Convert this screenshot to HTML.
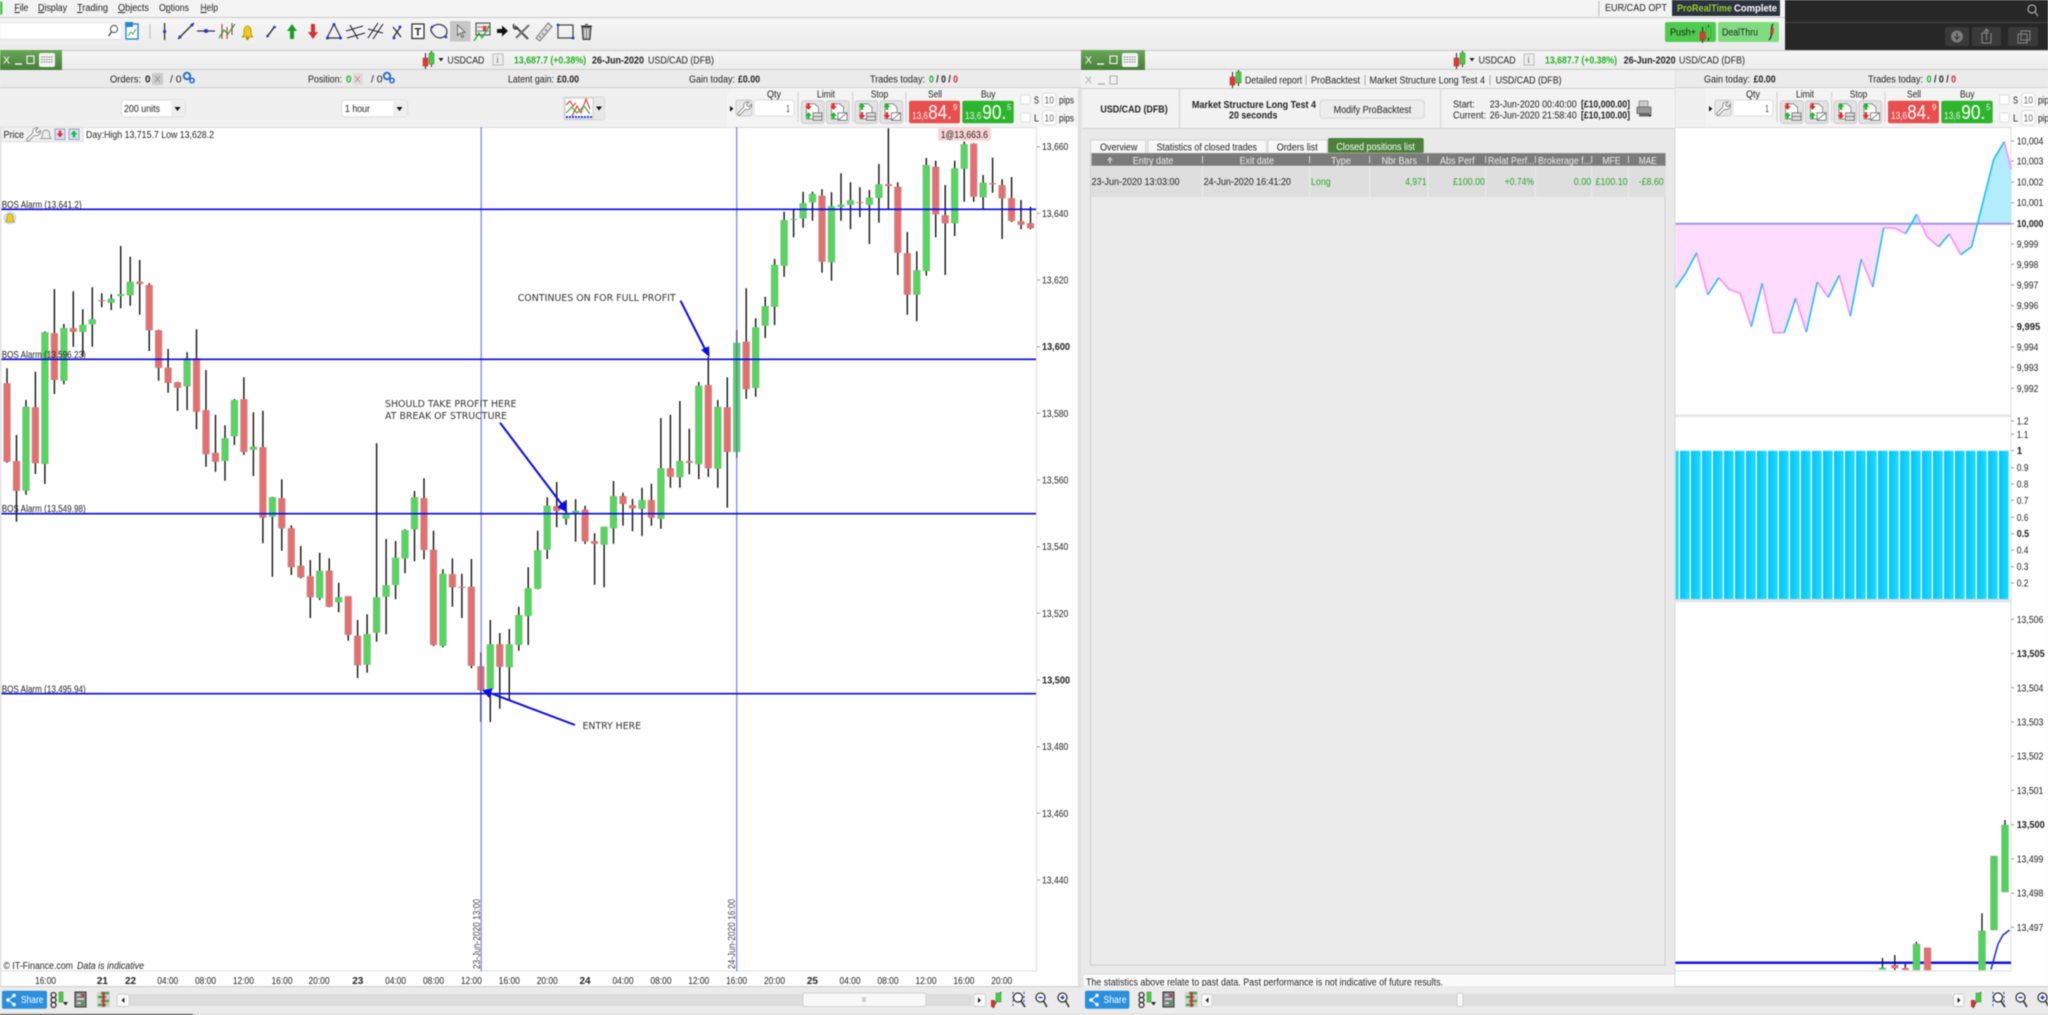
<!DOCTYPE html>
<html><head><meta charset="utf-8"><title>ProRealTime</title>
<style>
html,body{margin:0;padding:0;background:#ececec;width:2048px;height:1015px;overflow:hidden}
svg{display:block;filter:blur(.4px)}
text{font-family:"Liberation Sans",sans-serif;font-size:10px;fill:#222}
.b{font-weight:bold}
.g{fill:#2aa52a}.bg{font-weight:bold;fill:#22b022}
.r{fill:#d22}
.w{fill:#fff}
.gy{fill:#666}
.an{font-family:"DejaVu Sans","Liberation Sans",sans-serif;fill:#333}
.h{fill:#eee}
</style></head><body>
<svg xmlns="http://www.w3.org/2000/svg" width="2048" height="1015" viewBox="0 0 2048 1015">
<defs>
<linearGradient id="tb" x1="0" y1="0" x2="0" y2="1"><stop offset="0" stop-color="#f6f6f6"/><stop offset="1" stop-color="#ebebeb"/></linearGradient>
<linearGradient id="gb" x1="0" y1="0" x2="0" y2="1"><stop offset="0" stop-color="#6aa85a"/><stop offset="1" stop-color="#467f38"/></linearGradient>
<linearGradient id="cy" x1="0" y1="0" x2="1" y2="0"><stop offset="0" stop-color="#08c2f8"/><stop offset="1" stop-color="#1cdcff"/></linearGradient>
<pattern id="bars" patternUnits="userSpaceOnUse" x="1680" y="450" width="11" height="150"><rect x="0" y="0.7" width="9.7" height="148.3" fill="url(#cy)"/></pattern>
<g id="ci"><path d="M3.5 0V16M9.5-2V14" stroke="#222" stroke-width="1"/><rect x="1" y="5" width="5" height="8" fill="#e33" stroke="#933" stroke-width=".5"/><rect x="7" y="0" width="5" height="11" fill="#4c4" stroke="#383" stroke-width=".5"/></g>
<g id="gear"><circle cx="0" cy="0" r="3.2" fill="none" stroke="#2a6fd0" stroke-width="2"/><circle cx="5" cy="4.5" r="2.2" fill="none" stroke="#2a6fd0" stroke-width="1.6"/></g>
<path id="wr" d="M2 14.5L1 13 7.5 6.500C6.500 3.500 9 .5 12.500 1.500L10 4 10.800 5.800 12.800 6.200 14.800 3.800C15.500 7.500 12 10 9 8.800L3 14.800Z" fill="#fff" stroke="#777" stroke-width=".8"/>
<g id="dn"><path d="M-1.2-3.4h2.4v3h2.2l-3.4 3.8-3.4-3.8h2.2z" fill="#e22"/></g>
<g id="up"><path d="M-1.2 3.4h2.4v-3h2.2l-3.4-3.8-3.4 3.8h2.2z" fill="#1b2"/></g>
<g id="ob"><rect width="22.6" height="22.6" rx="2.5" fill="#e3e3e3" stroke="#c9c9c9"/><path d="M5 3h8l4 3.5V18H5z" fill="#fff" stroke="#777" stroke-width=".8"/></g>
<g id="tbl"><rect x="11.5" y="12" width="9" height="7.5" fill="#ddd" stroke="#666" stroke-width=".8"/><path d="M11.5 15.7h9" stroke="#666" stroke-width=".8"/></g>
<g id="sl"><rect x="11.5" y="12" width="9" height="7.5" fill="#fff" stroke="#666" stroke-width=".8"/><path d="M11.5 19.5l9-7.5" stroke="#666" stroke-width=".8"/></g>
<g id="orderpanel">
<path d="M727 127 Q727 122 727 96 Q727 90 733 88 H1078 V127Z" fill="#f4f4f4"/>
<path d="M730 106l3.4 2.8-3.4 2.8z" fill="#111"/>
<rect x="736" y="100" width="16" height="16" rx="2" fill="#e6e6e6" stroke="#ccc"/><use href="#wr" x="736.500" y="100.500"/>
<rect x="754" y="100" width="40" height="16" rx="2.5" fill="#fff" stroke="#ddd"/>
<text x="767" y="97.5" textLength="14" lengthAdjust="spacingAndGlyphs">Qty</text>
<text x="786.5" y="112" textLength="3" lengthAdjust="spacingAndGlyphs">1</text>
<path d="M798 92V122M852.7 92V122M906 92V122" stroke="#ccc"/>
<text x="817" y="97.5" textLength="18" lengthAdjust="spacingAndGlyphs">Limit</text>
<text x="870.7" y="97.5" textLength="17.5" lengthAdjust="spacingAndGlyphs">Stop</text>
<use href="#ob" x="801.5" y="100.8"/><use href="#tbl" x="801.5" y="100.8"/><use href="#dn" x="808.5" y="106.5"/><use href="#up" x="808.5" y="115.5"/>
<use href="#ob" x="826.5" y="100.8"/><use href="#sl" x="826.5" y="100.8"/><use href="#dn" x="833.5" y="106.5"/><use href="#up" x="833.5" y="115.5"/>
<use href="#ob" x="855" y="100.8"/><use href="#tbl" x="855" y="100.8"/><use href="#up" x="862" y="106.5"/><use href="#dn" x="862" y="115.5"/>
<use href="#ob" x="880" y="100.8"/><use href="#sl" x="880" y="100.8"/><use href="#up" x="887" y="106.5"/><use href="#dn" x="887" y="115.5"/>
<text x="928" y="97.5" textLength="14" lengthAdjust="spacingAndGlyphs">Sell</text>
<text x="981" y="97.5" textLength="14.5" lengthAdjust="spacingAndGlyphs">Buy</text>
<rect x="909" y="100.7" width="51" height="22.6" rx="2" fill="#e8504f"/>
<rect x="962.3" y="100.7" width="51.4" height="22.6" rx="2" fill="#2db52d"/>
<text x="912" y="119" class="h" textLength="16" lengthAdjust="spacingAndGlyphs">13,6</text>
<text x="928.3" y="119" class="w" style="font-size:20px" textLength="23.5" lengthAdjust="spacingAndGlyphs">84.</text>
<text x="953" y="110" class="h" style="font-size:8px">9</text>
<text x="965" y="119" class="h" textLength="16.5" lengthAdjust="spacingAndGlyphs">13,6</text>
<text x="982.3" y="119" class="w" style="font-size:20px" textLength="24" lengthAdjust="spacingAndGlyphs">90.</text>
<text x="1007" y="110" class="h" style="font-size:8px">5</text>
<rect x="1020.7" y="95" width="9.3" height="9.3" rx="1" fill="#fff" stroke="#ddd"/>
<text x="1034" y="103.5" textLength="5" lengthAdjust="spacingAndGlyphs">S</text>
<rect x="1042.7" y="93" width="13.3" height="13.7" rx="3" fill="#fff" stroke="#ddd"/>
<text x="1044.5" y="103.5" class="gy" textLength="9.5" lengthAdjust="spacingAndGlyphs">10</text>
<text x="1059" y="103.5" textLength="15" lengthAdjust="spacingAndGlyphs">pips</text>
<rect x="1020.7" y="113" width="9.3" height="9.3" rx="1" fill="#fff" stroke="#ddd"/>
<text x="1034" y="121.5" textLength="5" lengthAdjust="spacingAndGlyphs">L</text>
<rect x="1042.7" y="110.5" width="13.3" height="14.5" rx="3" fill="#fff" stroke="#ddd"/>
<text x="1044.5" y="121.5" class="gy" textLength="9.5" lengthAdjust="spacingAndGlyphs">10</text>
<text x="1059" y="121.5" textLength="15" lengthAdjust="spacingAndGlyphs">pips</text>
</g>
</defs>

<rect width="2048" height="1015" fill="#ececec"/>
<!-- menu -->
<rect width="2048" height="17" fill="#f3f3f3"/><path d="M0 17.5H2048" stroke="#c9c9c9"/>
<rect x="-3" y="2" width="5" height="12" fill="#4c4" stroke="#383" stroke-width=".5"/>
<text x="14.4" y="11" textLength="14" lengthAdjust="spacingAndGlyphs"><tspan text-decoration="underline">F</tspan>ile</text>
<text x="38" y="11" textLength="29" lengthAdjust="spacingAndGlyphs"><tspan text-decoration="underline">D</tspan>isplay</text>
<text x="77" y="11" textLength="31" lengthAdjust="spacingAndGlyphs"><tspan text-decoration="underline">T</tspan>rading</text>
<text x="118" y="11" textLength="31" lengthAdjust="spacingAndGlyphs"><tspan text-decoration="underline">O</tspan>bjects</text>
<text x="159" y="11" textLength="30" lengthAdjust="spacingAndGlyphs">O<tspan text-decoration="underline">p</tspan>tions</text>
<text x="200.5" y="11" textLength="17.5" lengthAdjust="spacingAndGlyphs"><tspan text-decoration="underline">H</tspan>elp</text>
<path d="M1599 1V16" stroke="#bbb"/>
<text x="1605" y="11" textLength="62" lengthAdjust="spacingAndGlyphs">EUR/CAD OPT</text>
<rect x="1672" y="0" width="108" height="16" fill="#2c3340"/>
<text x="1677" y="11.5" class="b" style="fill:#9c3" textLength="55" lengthAdjust="spacingAndGlyphs">ProRealTime</text>
<text x="1734" y="11.5" class="b w" textLength="43" lengthAdjust="spacingAndGlyphs">Complete</text>
<!-- toolbar -->
<rect y="18" width="2048" height="32" fill="url(#tb)"/><path d="M0 50.5H2048" stroke="#c6c6c6"/>
<rect x="-4" y="22.7" width="126" height="16.5" rx="3" fill="#fff" stroke="#e2e2e2"/>
<circle cx="114" cy="29" r="3.6" fill="none" stroke="#444"/><path d="M111.5 32l-3 4" stroke="#444" stroke-width="1.3"/>
<g id="tools">
<rect x="126" y="24" width="12" height="15" fill="#fff" stroke="#2a86c8" stroke-width="1.4"/><path d="M128 36l3-4 2 2 3-5" stroke="#3a4" fill="none"/><rect x="125" y="22" width="8" height="5" fill="#2a86c8"/>
<path d="M150 24V39" stroke="#bbb"/>
<path d="M164.6 23V40" stroke="#333" stroke-width="1.3"/><circle cx="164.6" cy="31.5" r="1.6" fill="#23c"/>
<path d="M178 39L194 23" stroke="#333" stroke-width="1.3"/><circle cx="180" cy="37" r="1.5" fill="#23c"/><circle cx="192" cy="25" r="1.5" fill="#23c"/>
<path d="M197 31H215" stroke="#333" stroke-width="1.3"/><circle cx="206" cy="31" r="2" fill="#23c"/>
<path d="M219 38L224 30 228 34 235 24" stroke="#2a2" fill="none" stroke-width="1.2"/><path d="M222 24v15M227 27v12M232 23v12" stroke="#a33" stroke-width="1"/>
<path d="M242 37c2-1 2-4 2-7a3.5 4 0 0 1 7 0c0 3 0 6 2 7z" fill="#f2c818" stroke="#a80" stroke-width=".7"/><circle cx="247.5" cy="38.5" r="1.5" fill="#a80"/>
<path d="M267 37L275 26" stroke="#222" stroke-width="1.4"/><circle cx="267.5" cy="36" r="1.3" fill="#23c"/><circle cx="274.5" cy="27" r="1.3" fill="#23c"/>
<path d="M292 24l5 7h-3v8h-4v-8h-3z" fill="#1a9d2a"/>
<path d="M313 39l5-7h-3v-8h-4v8h-3z" fill="#d93030"/>
<path d="M334 24L327 38H341Z" fill="none" stroke="#334" stroke-width="1.2"/><circle cx="334" cy="24.5" r="1.5" fill="#23c"/><circle cx="327.5" cy="38" r="1.5" fill="#23c"/><circle cx="340.5" cy="38" r="1.5" fill="#23c"/>
<path d="M346 31L363 26M347 38L365 33M350 25L358 39" stroke="#223" stroke-width="1.1"/>
<path d="M368 38L378 23M373 39L383 24M368 29L383 33" stroke="#223" stroke-width="1.1"/>
<path d="M393 38L401 26M393 27L401 37" stroke="#223" stroke-width="1.2"/><circle cx="400" cy="27" r="1.4" fill="#23c"/><circle cx="394" cy="38" r="1.4" fill="#23c"/>
<rect x="412" y="24" width="12" height="14.5" fill="#fff" stroke="#333" stroke-width="1.3"/><text x="414.5" y="35.5" class="b" style="font-size:11px">T</text>
<path d="M432 27C438 22 447 25 447 32C447 38 437 40 434 35C431 32 430 29 432 27Z" fill="none" stroke="#334" stroke-width="1.2"/><circle cx="432" cy="27" r="1.3" fill="#23c"/><circle cx="446" cy="37" r="1.3" fill="#23c"/>
<rect x="450" y="21" width="20.5" height="20.5" fill="#c6c6c6"/><path d="M457.5 25v10.5l2.6-2.4 2 4.3 1.6-.8-2-4.2h3.4z" fill="#e6e6e6" stroke="#555" stroke-width=".8"/>
<rect x="476" y="23" width="14" height="12" fill="#e9e9e9" stroke="#444"/><path d="M477 27h12M477 31h12" stroke="#888"/><path d="M474 41L479 33 482 38 490 25" fill="none" stroke="#2a2" stroke-width="1.2"/><rect x="483" y="26" width="3" height="5" fill="#d33"/>
<path d="M497 29h5v-3.5l6 5.500-6 5.500V33h-5z" fill="#111"/>
<path d="M515 26L528 39" stroke="#555" stroke-width="2.200"/><path d="M529 25L516 38" stroke="#777" stroke-width="2.200"/><path d="M514 24a3.500 3.500 0 0 0 1 5l3-1" stroke="#222" stroke-width="1.300" fill="none"/>
<path d="M536 38L548 23l4 3.5L540 41z" fill="#ddd" stroke="#777"/><path d="M539 36l2 2M542 33l2 2M545 29l2 2" stroke="#777"/>
<rect x="558" y="25" width="15" height="13" fill="none" stroke="#444" stroke-width="1.2"/><circle cx="558" cy="25" r="1.4" fill="#23c"/><circle cx="573" cy="38" r="1.4" fill="#23c"/>
<path d="M582 27h9l-1 12.5h-7zM581 26h11M585 24.5h3" fill="#999" stroke="#333"/><path d="M585 29v8.5M588 29v8.5" stroke="#eee"/>
</g>
<rect x="1665" y="22" width="51" height="20" rx="2" fill="#4fcb4f"/>
<text x="1670" y="35.5" textLength="26" lengthAdjust="spacingAndGlyphs">Push+</text><use href="#ci" x="1699" y="27"/>
<rect x="1718" y="22" width="61" height="20" rx="2" fill="#7fdd80"/>
<text x="1722" y="35.5" textLength="36" lengthAdjust="spacingAndGlyphs">DealThru</text><path d="M1769 40c5-5 0-10 4-16" stroke="#222" fill="none" stroke-width="1.2"/><path d="M1770 33l3 2 1-7-2-1z" fill="#d33"/>
<!-- dark corner -->
<rect x="1785" y="0" width="263" height="50" fill="#272727"/><path d="M1785 22.5H2048" stroke="#4a4a4a"/>
<circle cx="2032" cy="9" r="4" fill="none" stroke="#aaa" stroke-width="1.2"/><path d="M2035 12l3 4" stroke="#aaa" stroke-width="1.2"/>
<rect x="1945" y="27" width="24" height="19" rx="2" fill="#3a3a3a"/><circle cx="1957" cy="36.5" r="6" fill="#7c7c7c"/><path d="M1957 33v5M1954.5 36.5l2.5 2.6 2.5-2.6" stroke="#333" fill="none"/>
<rect x="1972" y="27" width="29" height="19" rx="2" fill="#3a3a3a"/><path d="M1982 33h6M1982 33v10h9v-10M1986.5 40V30M1984 32l2.500-3 2.500 3" stroke="#888" fill="none"/>
<rect x="2008" y="27" width="30" height="19" rx="2" fill="#3a3a3a"/><rect x="2018" y="34" width="9" height="9" fill="none" stroke="#888"/><rect x="2021" y="31" width="9" height="9" fill="none" stroke="#888"/>

<!-- LEFT WINDOW -->
<rect y="51" width="1081" height="19" fill="url(#tb)"/><path d="M0 69.5H1081" stroke="#ccc"/>
<rect x="0" y="50" width="62" height="20" fill="url(#gb)"/>
<text x="3" y="63.500" class="w" textLength="7" lengthAdjust="spacingAndGlyphs">X</text><path d="M15 64h7" stroke="#fff" stroke-width="1.300"/><rect x="27" y="56" width="7" height="7.500" fill="none" stroke="#fff"/>
<rect x="39" y="53" width="16" height="14" rx="2" fill="#f4f4f4"/><path d="M41 57h12M41 59.500h12M41 62h12" stroke="#777" stroke-dasharray="1.500 1"/>
<use href="#ci" x="422" y="53"/><path d="M438.500 58h5l-2.500 3.500z" fill="#222"/>
<text x="447.400" y="63.500" textLength="37" lengthAdjust="spacingAndGlyphs">USDCAD</text>
<rect x="493" y="54" width="10" height="11" fill="#eee" stroke="#bbb"/><text x="496.500" y="63" class="gy" style="font-size:9px">i</text>
<text x="514" y="63.500" class="bg" textLength="72" lengthAdjust="spacingAndGlyphs">13,687.7 (+0.38%)</text>
<text x="592" y="63.500" class="b" textLength="52" lengthAdjust="spacingAndGlyphs">26-Jun-2020</text>
<text x="648" y="63.500" textLength="66" lengthAdjust="spacingAndGlyphs">USD/CAD (DFB)</text>

<rect y="70" width="1081" height="17" fill="#ebebeb"/><path d="M0 87.500H1081" stroke="#d0d0d0"/>
<text x="110" y="82.500" textLength="31" lengthAdjust="spacingAndGlyphs">Orders:</text><text x="145" y="82.500" class="b">0</text>
<rect x="152" y="73" width="11" height="12" fill="#ccc"/><path d="M155 76l5 6m0-6l-5 6" stroke="#999"/>
<text x="170" y="82.500" textLength="11.600" lengthAdjust="spacingAndGlyphs">/ 0</text><use href="#gear" x="187" y="76"/>
<text x="308" y="82.500" textLength="34" lengthAdjust="spacingAndGlyphs">Position:</text><text x="346" y="82.500" class="bg">0</text>
<rect x="353" y="73" width="10" height="12" fill="#ddd"/><path d="M355 76l5 6m0-6l-5 6" stroke="#e88"/>
<text x="371" y="82.500" textLength="11.600" lengthAdjust="spacingAndGlyphs">/ 0</text><use href="#gear" x="387" y="76"/>
<text x="508" y="82.500" textLength="46" lengthAdjust="spacingAndGlyphs">Latent gain:</text><text x="557" y="82.500" class="b" textLength="22" lengthAdjust="spacingAndGlyphs">£0.00</text>
<text x="689" y="82.500" textLength="46" lengthAdjust="spacingAndGlyphs">Gain today:</text><text x="738" y="82.500" class="b" textLength="22" lengthAdjust="spacingAndGlyphs">£0.00</text>
<text x="870" y="82.500" textLength="55" lengthAdjust="spacingAndGlyphs">Trades today:</text>
<text x="929" y="82.500" class="b" textLength="29" lengthAdjust="spacingAndGlyphs"><tspan class="bg">0</tspan> / 0 / <tspan style="fill:#d22">0</tspan></text>

<rect y="88" width="1081" height="39" fill="#f0f0f0"/>
<rect x="121.500" y="100" width="64" height="16.700" rx="3" fill="#fff" stroke="#ddd"/><rect x="171" y="101" width="14" height="15" fill="#eee"/><path d="M174.500 107h6l-3 4z" fill="#111"/>
<text x="124" y="112" textLength="36" lengthAdjust="spacingAndGlyphs">200 units</text>
<rect x="341.600" y="100" width="66" height="16.700" rx="3" fill="#fff" stroke="#ddd"/><rect x="393" y="101" width="14" height="15" fill="#eee"/><path d="M396.500 107h6l-3 4z" fill="#111"/>
<text x="345" y="112" textLength="25" lengthAdjust="spacingAndGlyphs">1 hour</text>
<rect x="563.700" y="96.700" width="41" height="23.300" rx="2" fill="#e8e8e8" stroke="#ddd"/><rect x="565" y="98" width="28" height="21" fill="#fff" stroke="#ccc"/>
<path d="M566 105l4-4 3 5 3-3M572 116l5-10 4 7 5-14 4 10" fill="none" stroke="#d33" stroke-width="1.100"/><path d="M566 113l6-6 5 6 7-7 6 8" fill="none" stroke="#3a3" stroke-width="1.100"/><path d="M566 117h26" stroke="#23c" stroke-width="2" stroke-dasharray="2 1"/>
<path d="M596 106.500h6l-3 4z" fill="#111"/>
<use href="#orderpanel"/>
<!-- chart -->
<rect x="1.500" y="127" width="1076.500" height="859" fill="#fff"/>
<rect x="0" y="127" width="1.500" height="860" fill="#e2e2e2"/>
<path d="M1036.500 127V971M1.500 127.500H1036.500M1.500 971H1036.500" stroke="#ddd" fill="none"/>
<rect x="1078" y="88" width="3" height="899" fill="#e0e0e0"/>
<path d="M7 368.300V462.700M16.500 435V521.700M26 400V494.700M35.400 371.700V474M44.900 331.500V484M54.400 289V394M63.900 324V384.300M73.300 291.300V346.700M82.800 309.300V356.700M92.300 287.300V346.700M101.800 293.300V307.300M111.200 294.300V310M120.700 246V308.300M130.200 256.700V305.700M139.700 260V314.700M149.200 283.300V351M158.600 329.700V380.700M168.100 349V392.700M177.600 381.700V411M187.100 352.300V410M196.500 329.300V429.300M206 370V466.700M215.500 414.700V471.700M225 425.300V480.700M234.400 399V445M243.900 377.300V455M253.400 412.300V476M262.900 410.700V543.300M272.400 496.700V576.700M281.800 479.300V550.700M291.300 525.300V575M300.800 546V578.300M310.300 560V618M319.700 552.700V600M329.200 558.300V607.300M338.700 582.700V612.300M348.200 596V640.700M357.600 620V678M367.100 614.300V672.700M376.600 443.300V641.700M386.100 539V634.300M395.600 541V599.300M405 529.300V573.300M414.500 491V561.300M424 478.300V559.300M433.500 530.700V646M442.900 569.300V647.300M452.400 558.300V606.700M461.900 573.700V618M471.400 559V668.300M480.900 652.300V722M490.300 620V722M499.800 633V708.700M509.300 629V700M518.800 606.700V650.700M528.200 567.300V645M537.700 530.700V589.300M547.200 497.300V559M556.700 482V527.300M566.100 500V524.700M575.600 499.300V541.700M585.100 505.700V544M594.600 533.300V584.700M604.100 526.700V587.300M613.500 481V543.700M623 492.700V525.700M632.500 499V531.300M642 487.700V536M651.400 483.700V525.700M660.900 418V528.700M670.400 414.700V487.700M679.900 401V487.700M689.300 428.700V474.300M698.800 382V479.300M708.300 356.700V477M717.800 400V487.700M727.300 377.300V507.700M736.700 330V458M746.200 288.300V398.700M755.700 318.300V396.700M765.200 296.700V338M774.600 259V325M784.100 211.700V276.700M793.600 210V237.300M803.100 191.700V227.700M812.500 191.700V220.700M822 189.300V272.700M831.500 192.300V280.700M841 173.300V220.700M850.500 182.300V229.300M859.900 187.300V217.300M869.400 190V244M878.900 164V222.700M888.400 128.300V209.300M897.800 182.300V275M907.300 232V314.700M916.800 251.300V321.300M926.300 158V275.700M935.700 160.700V237.300M945.200 185V275M954.700 160.700V236M964.200 141.700V201.700M973.700 143.300V201.700M983.100 175V209.300M992.600 157.700V192.700M1002.100 179.300V239M1011.600 177V222M1021 200V229.300M1030.500 206.700V229.300" stroke="#111" stroke-width="1.400" fill="none"/>
<path d="M26 406.700V490.700M44.900 332.300V464M63.900 328V380.700M82.800 324.700V332M92.300 319.300V324.300M111.200 298.700V302.700M120.700 294.300V296M130.200 281.700V295.300M187.100 358.300V386.300M225 438.300V461M234.400 400V436.300M253.400 446.700V449.700M272.400 497.300V516.700M319.700 570.700V598M338.700 597.300V602.300M367.100 634V664.700M376.600 597.300V632.700M386.100 585.300V596.700M395.600 557.700V585M405 530V558.300M414.500 497.300V529.300M442.900 573.700V645.700M490.300 644.300V689M509.300 644.300V667.300M518.800 615V644.700M528.200 588.300V616M537.700 550.300V588.700M547.200 505.700V549.700M566.100 513.300V518.700M575.600 510.700V513.700M604.100 526.700V544.700M613.500 496V528.300M642 500V508.700M660.900 468.300V518.700M679.900 461V477.300M698.800 385.700V464.300M717.800 406.700V468.700M736.700 342.700V452M755.700 327.300V388M765.200 306V325.700M774.600 264.700V306.700M784.100 220V265.700M793.600 219.300V220M803.100 203.300V218.300M812.500 194V202.300M831.500 206.300V262.300M841 204.700V207M850.500 200.300V204.700M869.400 197.700V204.700M878.900 184.300V198M916.800 270.300V294.700M926.300 165V271M954.700 168.300V223.300M964.200 144.300V168.700M983.100 182.700V197.300" fill="none" stroke="#a8a8a8" stroke-width="7.400"/>
<path d="M26 406.700V490.700M44.900 332.300V464M63.900 328V380.700M82.800 324.700V332M92.300 319.300V324.300M111.200 298.700V302.700M120.700 294.300V296M130.200 281.700V295.300M187.100 358.300V386.300M225 438.300V461M234.400 400V436.300M253.400 446.700V449.700M272.400 497.300V516.700M319.700 570.700V598M338.700 597.300V602.300M367.100 634V664.700M376.600 597.300V632.700M386.100 585.300V596.700M395.600 557.700V585M405 530V558.300M414.500 497.300V529.300M442.900 573.700V645.700M490.300 644.300V689M509.300 644.300V667.300M518.800 615V644.700M528.200 588.300V616M537.700 550.300V588.700M547.200 505.700V549.700M566.100 513.300V518.700M575.600 510.700V513.700M604.100 526.700V544.700M613.500 496V528.300M642 500V508.700M660.900 468.300V518.700M679.900 461V477.300M698.800 385.700V464.300M717.800 406.700V468.700M736.700 342.700V452M755.700 327.300V388M765.200 306V325.700M774.600 264.700V306.700M784.100 220V265.700M793.600 219.300V220M803.100 203.300V218.300M812.500 194V202.300M831.500 206.300V262.300M841 204.700V207M850.500 200.300V204.700M869.400 197.700V204.700M878.900 184.300V198M916.800 270.300V294.700M926.300 165V271M954.700 168.300V223.300M964.200 144.300V168.700M983.100 182.700V197.300" fill="none" stroke="#52d85c" stroke-width="6"/>
<path d="M7 383.300V461.700M16.500 461V490.700M35.400 407.300V463.300M54.400 333.300V380M73.300 328V332M101.800 300.300V301.300M139.700 281.700V284M149.200 285V330.300M158.600 330.300V367.700M168.100 367.700V383M177.600 382.300V387.700M196.500 358.300V411.700M206 410.300V454.300M215.500 452.700V461.700M243.900 399.300V452M262.900 447.300V517.700M281.800 498.300V528.300M291.300 528.300V567.300M300.800 565.700V577.300M310.300 576.300V597.300M329.200 570.700V606.700M348.200 596.300V634.700M357.600 635.700V665.300M424 498.300V550M433.500 549.700V645M452.400 574.300V587.300M461.900 586.700V587.700M471.400 586.700V665.700M480.900 666.300V690.300M499.800 644.300V666.700M556.700 506.300V511M585.100 509.700V541.300M594.600 541V543.700M623 496V504M632.500 505.300V508.300M651.400 500V517.700M670.400 468.300V476.700M689.300 461V462.700M708.300 385V468.300M727.300 407.300V452M746.200 341.700V389.300M822 195.700V261.700M859.900 202V203M888.400 184.300V186M897.800 186.700V252.700M907.300 253.300V294.700M935.700 166.700V214.300M945.200 215.300V223.300M973.700 143.700V196.700M992.600 183.300V184.300M1002.100 185.300V198.300M1011.600 198.300V221M1021 221.300V224.700M1030.500 223.300V228.300" fill="none" stroke="#a8a8a8" stroke-width="7.400"/>
<path d="M7 383.300V461.700M16.500 461V490.700M35.400 407.300V463.300M54.400 333.300V380M73.300 328V332M101.800 300.300V301.300M139.700 281.700V284M149.200 285V330.300M158.600 330.300V367.700M168.100 367.700V383M177.600 382.300V387.700M196.500 358.300V411.700M206 410.300V454.300M215.500 452.700V461.700M243.900 399.300V452M262.900 447.300V517.700M281.800 498.300V528.300M291.300 528.300V567.300M300.800 565.700V577.300M310.300 576.300V597.300M329.200 570.700V606.700M348.200 596.300V634.700M357.600 635.700V665.300M424 498.300V550M433.500 549.700V645M452.400 574.300V587.300M461.900 586.700V587.700M471.400 586.700V665.700M480.900 666.300V690.300M499.800 644.300V666.700M556.700 506.300V511M585.100 509.700V541.300M594.600 541V543.700M623 496V504M632.500 505.300V508.300M651.400 500V517.700M670.400 468.300V476.700M689.300 461V462.700M708.300 385V468.300M727.300 407.300V452M746.200 341.700V389.300M822 195.700V261.700M859.900 202V203M888.400 184.300V186M897.800 186.700V252.700M907.300 253.300V294.700M935.700 166.700V214.300M945.200 215.300V223.300M973.700 143.700V196.700M992.600 183.300V184.300M1002.100 185.300V198.300M1011.600 198.300V221M1021 221.300V224.700M1030.500 223.300V228.300" fill="none" stroke="#e86e6e" stroke-width="6"/>
<path d="M481.200 127V971M736.700 127V971" stroke="#6262f0" stroke-width="1"/>
<path d="M1.500 209.300H1036M1.500 359.300H1036M1.500 513.700H1036M1.500 693.700H1036" stroke="#0808f0" stroke-width="1.700"/>
<!-- arrows -->
<path d="M680.500 300.700L706.500 352" stroke="#0a0af0" stroke-width="2" fill="none"/><path d="M709 356L702 350 708.500 347Z" fill="#0a0af0" stroke="#0a0af0"/>
<path d="M500 422.700L563 506" stroke="#0a0af0" stroke-width="2" fill="none"/><path d="M566.700 511.700L558 507 564.500 501.500Z" fill="#0a0af0" stroke="#0a0af0"/>
<path d="M575 725L490 693" stroke="#0a0af0" stroke-width="2" fill="none"/><path d="M483 690.500L492 689 489 697Z" fill="#0a0af0" stroke="#0a0af0"/>
<text class="an" x="517.700" y="300.800" textLength="158" lengthAdjust="spacingAndGlyphs">CONTINUES ON FOR FULL PROFIT</text>
<text class="an" x="385" y="407" textLength="131.500" lengthAdjust="spacingAndGlyphs">SHOULD TAKE PROFIT HERE</text>
<text class="an" x="385" y="419" textLength="122" lengthAdjust="spacingAndGlyphs">AT BREAK OF STRUCTURE</text>
<text class="an" x="582.500" y="729" textLength="58.500" lengthAdjust="spacingAndGlyphs">ENTRY HERE</text>
<text x="1.700" y="208" textLength="80" lengthAdjust="spacingAndGlyphs">BOS Alarm (13,641.2)</text>
<text x="1.700" y="358" textLength="84" lengthAdjust="spacingAndGlyphs">BOS Alarm (13,596.23)</text>
<text x="1.700" y="512" textLength="84" lengthAdjust="spacingAndGlyphs">BOS Alarm (13,549.98)</text>
<text x="1.700" y="692.500" textLength="84" lengthAdjust="spacingAndGlyphs">BOS Alarm (13,495.94)</text>
<circle cx="10" cy="218" r="6.500" fill="#cfe0ee"/><path d="M5.500 222c1.500-1 1.500-3 1.500-5a3 3.500 0 0 1 6 0c0 2 0 4 1.500 5z" fill="#f4cc1a" stroke="#a80" stroke-width=".6"/>
<rect x="1" y="127" width="82" height="14.700" fill="#f0f0f0" stroke="#ddd"/>
<text x="3.500" y="138" textLength="20.500" lengthAdjust="spacingAndGlyphs">Price</text>
<use href="#wr" x="25.500" y="126.500"/>
<path d="M41 138.500c1.500-1 1.500-3 1.500-5a3.500 3.500 0 0 1 7 0c0 2 0 4 1.500 5z" fill="#eee" stroke="#999"/>
<rect x="55" y="129" width="10" height="10.500" fill="#cfe2f6" stroke="#a9c"/><use href="#dn" x="60" y="134"/>
<rect x="69" y="129" width="10" height="10.500" fill="#cfe2f6" stroke="#a9c"/><use href="#up" x="74" y="134"/>
<text x="86" y="138" textLength="128" lengthAdjust="spacingAndGlyphs">Day:High 13,715.7 Low 13,628.2</text>
<rect x="938" y="128" width="53" height="12.700" rx="2" fill="#fcd5d5"/>
<text x="940.700" y="138" textLength="47.300" lengthAdjust="spacingAndGlyphs">1@13,663.6</text>
<!-- price axis -->
<path d="M1037 146.700h3M1037 213.300h3M1037 280h3M1037 346.700h3M1037 413.300h3M1037 480h3M1037 546.700h3M1037 613.300h3M1037 680h3M1037 746.700h3M1037 813.300h3M1037 880h3" stroke="#999"/>
<g>
<text x="1042" y="150.200" textLength="26.300" lengthAdjust="spacingAndGlyphs">13,660</text>
<text x="1042" y="216.800" textLength="26.300" lengthAdjust="spacingAndGlyphs">13,640</text>
<text x="1042" y="283.500" textLength="26.300" lengthAdjust="spacingAndGlyphs">13,620</text>
<text x="1042" y="350.200" class="b" textLength="28" lengthAdjust="spacingAndGlyphs">13,600</text>
<text x="1042" y="416.800" textLength="26.300" lengthAdjust="spacingAndGlyphs">13,580</text>
<text x="1042" y="483.500" textLength="26.300" lengthAdjust="spacingAndGlyphs">13,560</text>
<text x="1042" y="550.200" textLength="26.300" lengthAdjust="spacingAndGlyphs">13,540</text>
<text x="1042" y="616.800" textLength="26.300" lengthAdjust="spacingAndGlyphs">13,520</text>
<text x="1042" y="683.500" class="b" textLength="28" lengthAdjust="spacingAndGlyphs">13,500</text>
<text x="1042" y="750.200" textLength="26.300" lengthAdjust="spacingAndGlyphs">13,480</text>
<text x="1042" y="816.800" textLength="26.300" lengthAdjust="spacingAndGlyphs">13,460</text>
<text x="1042" y="883.500" textLength="26.300" lengthAdjust="spacingAndGlyphs">13,440</text>
</g>
<text transform="rotate(-90 480 969)" x="480" y="969" class="gy" textLength="70" lengthAdjust="spacingAndGlyphs" style="fill:#444">23-Jun-2020 13:00</text>
<text transform="rotate(-90 735 969)" x="735" y="969" class="gy" textLength="70" lengthAdjust="spacingAndGlyphs" style="fill:#444">24-Jun-2020 16:00</text>
<text x="3.500" y="969" textLength="69.500" lengthAdjust="spacingAndGlyphs">© IT-Finance.com</text>
<text x="77" y="969" font-style="italic" textLength="67" lengthAdjust="spacingAndGlyphs">Data is indicative</text>
<!-- time axis -->
<g text-anchor="middle">
<text x="45.600" y="984" textLength="21" lengthAdjust="spacingAndGlyphs">16:00</text>
<text x="102.400" y="984" class="b">21</text><text x="130.500" y="984" class="b">22</text>
<text x="167.700" y="984" textLength="21" lengthAdjust="spacingAndGlyphs">04:00</text>
<text x="205.500" y="984" textLength="21" lengthAdjust="spacingAndGlyphs">08:00</text>
<text x="243.400" y="984" textLength="21" lengthAdjust="spacingAndGlyphs">12:00</text>
<text x="282" y="984" textLength="21" lengthAdjust="spacingAndGlyphs">16:00</text>
<text x="319" y="984" textLength="21" lengthAdjust="spacingAndGlyphs">20:00</text>
<text x="357.800" y="984" class="b">23</text>
<text x="395.600" y="984" textLength="21" lengthAdjust="spacingAndGlyphs">04:00</text>
<text x="433.500" y="984" textLength="21" lengthAdjust="spacingAndGlyphs">08:00</text>
<text x="471.400" y="984" textLength="21" lengthAdjust="spacingAndGlyphs">12:00</text>
<text x="509.300" y="984" textLength="21" lengthAdjust="spacingAndGlyphs">16:00</text>
<text x="547.200" y="984" textLength="21" lengthAdjust="spacingAndGlyphs">20:00</text>
<text x="585" y="984" class="b">24</text>
<text x="623" y="984" textLength="21" lengthAdjust="spacingAndGlyphs">04:00</text>
<text x="661" y="984" textLength="21" lengthAdjust="spacingAndGlyphs">08:00</text>
<text x="698.700" y="984" textLength="21" lengthAdjust="spacingAndGlyphs">12:00</text>
<text x="736.600" y="984" textLength="21" lengthAdjust="spacingAndGlyphs">16:00</text>
<text x="774.500" y="984" textLength="21" lengthAdjust="spacingAndGlyphs">20:00</text>
<text x="812.400" y="984" class="b">25</text>
<text x="850" y="984" textLength="21" lengthAdjust="spacingAndGlyphs">04:00</text>
<text x="888" y="984" textLength="21" lengthAdjust="spacingAndGlyphs">08:00</text>
<text x="926" y="984" textLength="21" lengthAdjust="spacingAndGlyphs">12:00</text>
<text x="963.900" y="984" textLength="21" lengthAdjust="spacingAndGlyphs">16:00</text>
<text x="1001.700" y="984" textLength="21" lengthAdjust="spacingAndGlyphs">20:00</text>
<text x="1707" y="984" textLength="22" lengthAdjust="spacingAndGlyphs">13:12</text>
<text x="1772.600" y="984" textLength="22" lengthAdjust="spacingAndGlyphs">13:14</text>
<text x="1839" y="984" textLength="22" lengthAdjust="spacingAndGlyphs">13:16</text>
<text x="1904.700" y="984" textLength="22" lengthAdjust="spacingAndGlyphs">13:18</text>
<text x="1970.700" y="984" textLength="22" lengthAdjust="spacingAndGlyphs">13:20</text>
</g>

<!-- RIGHT WINDOW BACKGROUND -->
<rect x="1081" y="51" width="967" height="19" fill="url(#tb)"/><path d="M1081 69.500H2048" stroke="#ccc"/>
<rect x="1081" y="50" width="64" height="20" fill="url(#gb)"/>
<text x="1085" y="63.500" class="w" textLength="7" lengthAdjust="spacingAndGlyphs">X</text><path d="M1097 64h7" stroke="#fff" stroke-width="1.300"/><rect x="1110" y="56" width="7" height="7.500" fill="none" stroke="#fff"/>
<rect x="1122" y="53" width="16" height="14" rx="2" fill="#f4f4f4"/><path d="M1124 57h12M1124 59.500h12M1124 62h12" stroke="#777" stroke-dasharray="1.500 1"/>
<use href="#ci" x="1453" y="53"/><path d="M1469.500 58h5l-2.500 3.500z" fill="#222"/>
<text x="1478.600" y="63.500" textLength="37" lengthAdjust="spacingAndGlyphs">USDCAD</text>
<rect x="1524" y="54" width="10" height="11" fill="#eee" stroke="#bbb"/><text x="1527.500" y="63" class="gy" style="font-size:9px">i</text>
<text x="1545" y="63.500" class="bg" textLength="72" lengthAdjust="spacingAndGlyphs">13,687.7 (+0.38%)</text>
<text x="1623.600" y="63.500" class="b" textLength="52" lengthAdjust="spacingAndGlyphs">26-Jun-2020</text>
<text x="1679" y="63.500" textLength="66" lengthAdjust="spacingAndGlyphs">USD/CAD (DFB)</text>
<rect x="1675" y="70" width="373" height="17" fill="#ebebeb"/><path d="M1675 87.500H2048" stroke="#d0d0d0"/>
<text x="1704" y="82.500" textLength="46" lengthAdjust="spacingAndGlyphs">Gain today:</text><text x="1753.600" y="82.500" class="b" textLength="22" lengthAdjust="spacingAndGlyphs">£0.00</text>
<text x="1868" y="82.500" textLength="55" lengthAdjust="spacingAndGlyphs">Trades today:</text>
<text x="1926.600" y="82.500" class="b" textLength="29.400" lengthAdjust="spacingAndGlyphs"><tspan class="bg">0</tspan> / 0 / <tspan style="fill:#d22">0</tspan></text>
<rect x="1675" y="88" width="373" height="39" fill="#f0f0f0"/>
<g transform="translate(979 0)">
<rect x="727" y="88" width="342" height="39" fill="#f4f4f4"/>
<path d="M730 106l3.400 2.800-3.400 2.800z" fill="#111"/>
<rect x="736" y="100" width="16" height="16" rx="2" fill="#e6e6e6" stroke="#ccc"/><use href="#wr" x="736.500" y="100.500"/>
<rect x="754" y="100" width="40" height="16" rx="2.500" fill="#fff" stroke="#ddd"/>
<text x="767" y="97.500" textLength="14" lengthAdjust="spacingAndGlyphs">Qty</text>
<text x="786.500" y="112" textLength="3" lengthAdjust="spacingAndGlyphs">1</text>
<path d="M798 92V122M852.700 92V122M906 92V122" stroke="#ccc"/>
<text x="817" y="97.500" textLength="18" lengthAdjust="spacingAndGlyphs">Limit</text>
<text x="870.700" y="97.500" textLength="17.500" lengthAdjust="spacingAndGlyphs">Stop</text>
<use href="#ob" x="801.500" y="100.800"/><use href="#tbl" x="801.500" y="100.800"/><use href="#dn" x="808.500" y="106.500"/><use href="#up" x="808.500" y="115.500"/>
<use href="#ob" x="826.500" y="100.800"/><use href="#sl" x="826.500" y="100.800"/><use href="#dn" x="833.500" y="106.500"/><use href="#up" x="833.500" y="115.500"/>
<use href="#ob" x="855" y="100.800"/><use href="#tbl" x="855" y="100.800"/><use href="#up" x="862" y="106.500"/><use href="#dn" x="862" y="115.500"/>
<use href="#ob" x="880" y="100.800"/><use href="#sl" x="880" y="100.800"/><use href="#up" x="887" y="106.500"/><use href="#dn" x="887" y="115.500"/>
<text x="928" y="97.500" textLength="14" lengthAdjust="spacingAndGlyphs">Sell</text>
<text x="981" y="97.500" textLength="14.500" lengthAdjust="spacingAndGlyphs">Buy</text>
<rect x="909" y="100.700" width="51" height="22.600" rx="2" fill="#e8504f"/>
<rect x="962.300" y="100.700" width="51.400" height="22.600" rx="2" fill="#2db52d"/>
<text x="912" y="119" class="h" textLength="16" lengthAdjust="spacingAndGlyphs">13,6</text>
<text x="928.300" y="119" class="w" style="font-size:20px" textLength="23.500" lengthAdjust="spacingAndGlyphs">84.</text>
<text x="953" y="110" class="h" style="font-size:8px">9</text>
<text x="965" y="119" class="h" textLength="16.500" lengthAdjust="spacingAndGlyphs">13,6</text>
<text x="982.300" y="119" class="w" style="font-size:20px" textLength="24" lengthAdjust="spacingAndGlyphs">90.</text>
<text x="1007" y="110" class="h" style="font-size:8px">5</text>
<rect x="1020.700" y="95" width="9.300" height="9.300" rx="1" fill="#fff" stroke="#ddd"/>
<text x="1034" y="103.500" textLength="5" lengthAdjust="spacingAndGlyphs">S</text>
<rect x="1042.700" y="93" width="13.300" height="13.700" rx="3" fill="#fff" stroke="#ddd"/>
<text x="1044.500" y="103.500" class="gy" textLength="9.500" lengthAdjust="spacingAndGlyphs">10</text>
<text x="1059" y="103.500" textLength="15" lengthAdjust="spacingAndGlyphs">pips</text>
<rect x="1020.700" y="113" width="9.300" height="9.300" rx="1" fill="#fff" stroke="#ddd"/>
<text x="1034" y="121.500" textLength="5" lengthAdjust="spacingAndGlyphs">L</text>
<rect x="1042.700" y="110.500" width="13.300" height="14.500" rx="3" fill="#fff" stroke="#ddd"/>
<text x="1044.500" y="121.500" class="gy" textLength="9.500" lengthAdjust="spacingAndGlyphs">10</text>
<text x="1059" y="121.500" textLength="15" lengthAdjust="spacingAndGlyphs">pips</text>
</g>
<!-- right charts -->
<rect x="1675" y="127" width="373" height="859" fill="#fff"/>
<path d="M2011 127V971M1675 127.500H2011M1675 415H2011M1675 416.500H2011M1675 600.300H2011M1675 601.800H2011M1675 971H2011" stroke="#ddd" fill="none"/>
<path d="M1675.700 223.700V287.700L1685.700 273.300 1696.700 252.700 1707.700 295 1718.700 277.700 1729.300 289.700 1740.300 293.300 1751.300 326.700 1762.300 283.300 1773.300 332.700 1784.300 332.700 1795.700 298.300 1806.300 332.300 1817.300 282 1828.300 297.300 1839.300 275.300 1850.300 316.300 1861.300 259 1872.700 287 1883.700 228 1894.700 228 1905.700 233.700 1911.300 223.700ZM1921.100 223.700L1927.300 237.300 1938.700 246.700 1949.300 234 1960.700 254.700 1971.700 246.700 1977.500 223.700Z" fill="#fddcfd"/>
<path d="M1911.300 223.700L1916.700 214 1921.100 223.700ZM1977.500 223.700L1982.700 203 1993.700 159.300 2004.300 141.700 2011 169.300V223.700Z" fill="#b2ecfd"/>
<path d="M1675.700 223.700H2011" stroke="#9e98ee" stroke-width="2"/>
<path d="M1696.700 252.700L1707.700 295M1718.700 277.700L1729.300 289.700 1740.300 293.300 1751.300 326.700M1762.300 283.300L1773.300 332.700 1784.300 332.700M1795.700 298.300L1806.300 332.300M1817.300 282L1828.300 297.300M1839.300 275.300L1850.300 316.300M1861.300 259L1872.700 287M1883.700 228L1894.700 228 1905.700 233.700M1916.700 214L1927.300 237.300 1938.700 246.700M1949.300 234L1960.700 254.700M2004.300 141.700L2011.300 169.300" fill="none" stroke="#ff8cf8" stroke-width="1.600"/>
<path d="M1675.700 287.700L1685.700 273.300 1696.700 252.700M1707.700 295L1718.700 277.700M1751.300 326.700L1762.300 283.300M1784.300 332.700L1795.700 298.300M1806.300 332.300L1817.300 282M1828.300 297.300L1839.300 275.300M1850.300 316.300L1861.300 259M1872.700 287L1883.700 228M1905.700 233.700L1916.700 214M1938.700 246.700L1949.300 234M1960.700 254.700L1971.700 246.700 1982.700 203 1993.700 159.300 2004.300 141.700" fill="none" stroke="#18c0fb" stroke-width="1.600"/>
<rect x="1675.700" y="450.700" width="333" height="148.300" fill="url(#bars)"/>
<path d="M1675.700 599.500H2010" stroke="#ddd"/>
<!-- lower candles -->
<path d="M1675 962.700H2011" stroke="#1212ee" stroke-width="2.500"/>
<path d="M1882.500 958V969M1894.800 955V970M1905.300 964V970M1916.400 941.700V948M1982 913.300V935M2005 820V830" stroke="#111" stroke-width="1.300"/>
<rect x="1879" y="967.700" width="7" height="2" fill="#4fd35b"/><rect x="1891.300" y="965" width="7" height="3.300" fill="#e86e6e"/><rect x="1901.800" y="968" width="7" height="2" fill="#e86e6e"/>
<rect x="1913" y="944" width="7" height="26" fill="#4fd35b" stroke="#999" stroke-width=".4"/><rect x="1924" y="947.700" width="7" height="22.300" fill="#e86e6e" stroke="#999" stroke-width=".4"/>
<rect x="1978.500" y="930.700" width="7" height="39.300" fill="#4fd35b" stroke="#999" stroke-width=".4"/>
<rect x="1990.500" y="856" width="7" height="74" fill="#4fd35b" stroke="#999" stroke-width=".4"/>
<rect x="2001.500" y="825" width="7" height="67" fill="#4fd35b" stroke="#999" stroke-width=".4"/>
<path d="M1991 969.500L1998 944 2003 935 2009.500 930" fill="none" stroke="#1a2ae8" stroke-width="1.500"/>
<path d="M2011 141h3M2011 161h3M2011 182h3M2011 202.700h3M2011 223.700h3M2011 244h3M2011 264.300h3M2011 285h3M2011 305.700h3M2011 326.700h3M2011 347h3M2011 367.300h3M2011 388.300h3M2011 421h3M2011 434.300h3M2011 450.700h3M2011 467.700h3M2011 484h3M2011 500.300h3M2011 517.300h3M2011 533.700h3M2011 550h3M2011 566.700h3M2011 583h3M2011 619.300h3M2011 653.500h3M2011 687.800h3M2011 722h3M2011 756.200h3M2011 790.400h3M2011 824.700h3M2011 858.900h3M2011 893.100h3M2011 927.300h3" stroke="#999"/>
<g>
<text x="2016.700" y="144.500" textLength="26.700" lengthAdjust="spacingAndGlyphs">10,004</text>
<text x="2016.700" y="164.500" textLength="26.700" lengthAdjust="spacingAndGlyphs">10,003</text>
<text x="2016.700" y="185.500" textLength="26.700" lengthAdjust="spacingAndGlyphs">10,002</text>
<text x="2016.700" y="206.200" textLength="26.700" lengthAdjust="spacingAndGlyphs">10,001</text>
<text x="2016.700" y="227.200" class="b" textLength="26.700" lengthAdjust="spacingAndGlyphs">10,000</text>
<text x="2016.700" y="247.500" textLength="21.700" lengthAdjust="spacingAndGlyphs">9,999</text>
<text x="2016.700" y="267.800" textLength="21.700" lengthAdjust="spacingAndGlyphs">9,998</text>
<text x="2016.700" y="288.500" textLength="21.700" lengthAdjust="spacingAndGlyphs">9,997</text>
<text x="2016.700" y="309.200" textLength="21.700" lengthAdjust="spacingAndGlyphs">9,996</text>
<text x="2016.700" y="330.200" class="b" textLength="23.500" lengthAdjust="spacingAndGlyphs">9,995</text>
<text x="2016.700" y="350.500" textLength="21.700" lengthAdjust="spacingAndGlyphs">9,994</text>
<text x="2016.700" y="370.800" textLength="21.700" lengthAdjust="spacingAndGlyphs">9,993</text>
<text x="2016.700" y="391.800" textLength="21.700" lengthAdjust="spacingAndGlyphs">9,992</text>
<text x="2016.700" y="424.500" textLength="11.700" lengthAdjust="spacingAndGlyphs">1.2</text>
<text x="2016.700" y="437.800" textLength="11.700" lengthAdjust="spacingAndGlyphs">1.1</text>
<text x="2016.700" y="454.200" class="b">1</text>
<text x="2016.700" y="471.200" textLength="11.700" lengthAdjust="spacingAndGlyphs">0.9</text>
<text x="2016.700" y="487.500" textLength="11.700" lengthAdjust="spacingAndGlyphs">0.8</text>
<text x="2016.700" y="503.800" textLength="11.700" lengthAdjust="spacingAndGlyphs">0.7</text>
<text x="2016.700" y="520.800" textLength="11.700" lengthAdjust="spacingAndGlyphs">0.6</text>
<text x="2016.700" y="537.200" class="b" textLength="12.500" lengthAdjust="spacingAndGlyphs">0.5</text>
<text x="2016.700" y="553.500" textLength="11.700" lengthAdjust="spacingAndGlyphs">0.4</text>
<text x="2016.700" y="570.200" textLength="11.700" lengthAdjust="spacingAndGlyphs">0.3</text>
<text x="2016.700" y="586.500" textLength="11.700" lengthAdjust="spacingAndGlyphs">0.2</text>
<text x="2016.700" y="622.800" textLength="26.700" lengthAdjust="spacingAndGlyphs">13,506</text>
<text x="2016.700" y="657" class="b" textLength="28" lengthAdjust="spacingAndGlyphs">13,505</text>
<text x="2016.700" y="691.300" textLength="26.700" lengthAdjust="spacingAndGlyphs">13,504</text>
<text x="2016.700" y="725.500" textLength="26.700" lengthAdjust="spacingAndGlyphs">13,503</text>
<text x="2016.700" y="759.700" textLength="26.700" lengthAdjust="spacingAndGlyphs">13,502</text>
<text x="2016.700" y="793.900" textLength="26.700" lengthAdjust="spacingAndGlyphs">13,501</text>
<text x="2016.700" y="828.200" class="b" textLength="28" lengthAdjust="spacingAndGlyphs">13,500</text>
<text x="2016.700" y="862.400" textLength="26.700" lengthAdjust="spacingAndGlyphs">13,499</text>
<text x="2016.700" y="896.600" textLength="26.700" lengthAdjust="spacingAndGlyphs">13,498</text>
<text x="2016.700" y="930.800" textLength="26.700" lengthAdjust="spacingAndGlyphs">13,497</text>
</g>

<!-- BACKTEST WINDOW -->
<rect x="1081" y="70" width="594" height="922" fill="#e9e9e9"/>
<path d="M1675 70V992" stroke="#d8d8d8"/>
<rect x="1081" y="70" width="594" height="18" fill="#f1f1f1"/><path d="M1081 88.500H1675" stroke="#cfcfcf"/>
<text x="1085" y="83.500" style="fill:#aaa" textLength="7" lengthAdjust="spacingAndGlyphs">X</text><path d="M1098 84h7" stroke="#aaa" stroke-width="1.300"/><rect x="1110" y="76" width="7" height="8" fill="none" stroke="#aaa"/>
<use href="#ci" x="1229" y="72"/>
<text x="1245" y="83.500" textLength="57" lengthAdjust="spacingAndGlyphs">Detailed report</text><path d="M1306 75v10" stroke="#aaa"/>
<text x="1311" y="83.500" textLength="49" lengthAdjust="spacingAndGlyphs">ProBacktest</text><path d="M1365 75v10" stroke="#aaa"/>
<text x="1369.500" y="83.500" textLength="115.500" lengthAdjust="spacingAndGlyphs">Market Structure Long Test 4</text><path d="M1490 75v10" stroke="#aaa"/>
<text x="1495.600" y="83.500" textLength="66" lengthAdjust="spacingAndGlyphs">USD/CAD (DFB)</text>
<rect x="1083" y="89" width="592" height="39" fill="#f2f2f2"/><path d="M1083 128.500H1675M1179.500 89V128M1440.700 89V128" stroke="#cfcfcf"/>
<text x="1100.400" y="112.500" class="b" textLength="67.300" lengthAdjust="spacingAndGlyphs">USD/CAD (DFB)</text>
<text x="1192" y="107.800" class="b" textLength="124" lengthAdjust="spacingAndGlyphs">Market Structure Long Test 4</text>
<text x="1229" y="118.500" class="b" textLength="48.400" lengthAdjust="spacingAndGlyphs">20 seconds</text>
<rect x="1320" y="100" width="104.400" height="18.300" rx="3" fill="#ececec" stroke="#d6d6d6"/>
<text x="1333.600" y="112.800" textLength="77.700" lengthAdjust="spacingAndGlyphs">Modify ProBacktest</text>
<text x="1453" y="107.500" textLength="21.700" lengthAdjust="spacingAndGlyphs">Start:</text>
<text x="1489.700" y="107.500" textLength="87" lengthAdjust="spacingAndGlyphs">23-Jun-2020 00:40:00</text>
<text x="1581" y="107.500" class="b" textLength="49" lengthAdjust="spacingAndGlyphs">[£10,000.00]</text>
<text x="1453" y="118.500" textLength="33" lengthAdjust="spacingAndGlyphs">Current:</text>
<text x="1489.700" y="118.500" textLength="87" lengthAdjust="spacingAndGlyphs">26-Jun-2020 21:58:40</text>
<text x="1581" y="118.500" class="b" textLength="49" lengthAdjust="spacingAndGlyphs">[£10,100.00]</text>
<rect x="1639" y="101" width="9" height="6" fill="#ccc" stroke="#777" stroke-width=".7"/><rect x="1637" y="107" width="14" height="6.500" fill="#999" stroke="#555" stroke-width=".7"/><rect x="1639" y="113" width="10" height="3.500" fill="#666"/><path d="M1648 114.500h4l-2 2.500z" fill="#222"/>
<!-- tabs -->
<rect x="1090.700" y="140" width="55" height="13.300" fill="#f7f7f7" stroke="#d4d4d4"/>
<text x="1100" y="150.500" textLength="37.400" lengthAdjust="spacingAndGlyphs">Overview</text>
<rect x="1148" y="140" width="118.400" height="13.300" fill="#f7f7f7" stroke="#d4d4d4"/>
<text x="1156.500" y="150.500" textLength="100.500" lengthAdjust="spacingAndGlyphs">Statistics of closed trades</text>
<rect x="1268" y="140" width="59" height="13.300" fill="#f7f7f7" stroke="#d4d4d4"/>
<text x="1276.700" y="150.500" textLength="41" lengthAdjust="spacingAndGlyphs">Orders list</text>
<rect x="1328" y="138" width="95.700" height="15.300" rx="2" fill="#4a8239"/>
<text x="1336.400" y="150" class="w" textLength="78.500" lengthAdjust="spacingAndGlyphs">Closed positions list</text>
<!-- table -->
<rect x="1090.500" y="153.300" width="574.500" height="811.700" fill="#ebebeb" stroke="#ccc"/>
<rect x="1091.500" y="153.300" width="574" height="12.500" fill="#7b7b7b"/>
<path d="M1110 163.500v-4M1108 160.500l2-2.800 2 2.800" stroke="#eee" fill="none"/>
<g class="h">
<text x="1132.800" y="163.800" class="h" textLength="40.600" lengthAdjust="spacingAndGlyphs">Entry date</text>
<text x="1239.600" y="163.800" class="h" textLength="34.400" lengthAdjust="spacingAndGlyphs">Exit date</text>
<text x="1331" y="163.800" class="h" textLength="20" lengthAdjust="spacingAndGlyphs">Type</text>
<text x="1381.600" y="163.800" class="h" textLength="35.400" lengthAdjust="spacingAndGlyphs">Nbr Bars</text>
<text x="1440" y="163.800" class="h" textLength="34.600" lengthAdjust="spacingAndGlyphs">Abs Perf</text>
<text x="1488" y="163.800" class="h" textLength="46.600" lengthAdjust="spacingAndGlyphs">Relat Perf...</text>
<text x="1538" y="163.800" class="h" textLength="53" lengthAdjust="spacingAndGlyphs">Brokerage f...</text>
<text x="1602.400" y="163.800" class="h" textLength="18" lengthAdjust="spacingAndGlyphs">MFE</text>
<text x="1638.700" y="163.800" class="h" textLength="18" lengthAdjust="spacingAndGlyphs">MAE</text>
</g>
<path d="M1202.500 156v7M1309.600 156v7M1369.700 156v7M1428 156v7M1485.700 156v7M1535.400 156v7M1591.700 156v7M1628.400 156v7" stroke="#ddd"/>
<rect x="1091.500" y="166.500" width="574" height="30.500" fill="#dedede"/>
<path d="M1202.500 166.500v30.500M1309.600 166.500v30.500M1369.700 166.500v30.500M1428 166.500v30.500M1485.700 166.500v30.500M1535.400 166.500v30.500M1591.700 166.500v30.500M1628.400 166.500v30.500" stroke="#ebebeb"/>
<text x="1091.500" y="185" textLength="88" lengthAdjust="spacingAndGlyphs">23-Jun-2020 13:03:00</text>
<text x="1203.600" y="185" textLength="87.300" lengthAdjust="spacingAndGlyphs">24-Jun-2020 16:41:20</text>
<text x="1311" y="185" class="g" textLength="19.700" lengthAdjust="spacingAndGlyphs">Long</text>
<text x="1405.300" y="185" class="g" textLength="21.400" lengthAdjust="spacingAndGlyphs">4,971</text>
<text x="1453" y="185" class="g" textLength="31.900" lengthAdjust="spacingAndGlyphs">£100.00</text>
<text x="1504.800" y="185" class="g" textLength="29.100" lengthAdjust="spacingAndGlyphs">+0.74%</text>
<text x="1573.700" y="185" class="g" textLength="17.600" lengthAdjust="spacingAndGlyphs">0.00</text>
<text x="1595.500" y="185" class="g" textLength="32.100" lengthAdjust="spacingAndGlyphs">£100.10</text>
<text x="1638.700" y="185" class="g" textLength="24.900" lengthAdjust="spacingAndGlyphs">-£8.60</text>
<rect x="1083" y="974" width="592" height="14" fill="#fafafa" stroke="#ddd"/>
<text x="1086" y="985.500" textLength="357" lengthAdjust="spacingAndGlyphs">The statistics above relate to past data. Past performance is not indicative of future results.</text>

<!-- bottom bars -->
<rect x="0" y="986" width="2048" height="27" fill="#ebebeb"/><path d="M0 986.500H1081M1675 986.500H2048" stroke="#ccc"/>
<rect x="0" y="1014" width="193" height="1" fill="#333"/><path d="M193 1014H2048" stroke="#ddd"/>
<rect x="2" y="990.700" width="45" height="18" rx="2" fill="#2a8fdc"/>
<circle cx="8" cy="1000" r="1.800" fill="#fff"/><circle cx="14" cy="995.500" r="1.800" fill="#fff"/><circle cx="14" cy="1004.500" r="1.800" fill="#fff"/><path d="M8 1000L14 995.500M8 1000L14 1004.500" stroke="#fff"/>
<text x="21" y="1003" class="w" textLength="22.500" lengthAdjust="spacingAndGlyphs">Share</text>
<rect x="1085" y="990.700" width="44.400" height="18" rx="2" fill="#2a8fdc"/>
<circle cx="1091" cy="1000" r="1.800" fill="#fff"/><circle cx="1097" cy="995.500" r="1.800" fill="#fff"/><circle cx="1097" cy="1004.500" r="1.800" fill="#fff"/><path d="M1091 1000L1097 995.500M1091 1000L1097 1004.500" stroke="#fff"/>
<text x="1103.500" y="1003" class="w" textLength="23" lengthAdjust="spacingAndGlyphs">Share</text>
<g id="bicons">
<circle cx="53.500" cy="995" r="2.500" fill="none" stroke="#333" stroke-width="1.300"/><circle cx="53.500" cy="1000" r="2.500" fill="none" stroke="#333" stroke-width="1.300"/><circle cx="53.500" cy="1005" r="2.500" fill="none" stroke="#333" stroke-width="1.300"/>
<rect x="59" y="992" width="4" height="10" fill="#4c4" stroke="#383" stroke-width=".5"/><path d="M63 1002h5l-2.500 3.500z" fill="#222"/>
<rect x="75" y="992" width="11" height="15" fill="#888" stroke="#333"/><path d="M77 995h3M77 999h7M77 1003h5" stroke="#fff"/><rect x="82" y="994" width="2.500" height="3" fill="#c33"/><rect x="81" y="1002" width="3" height="3" fill="#3a3"/>
<rect x="97" y="992" width="13" height="15" fill="#d0d0d0"/><path d="M101 993h8M98 997h8M101 1001h8M98 1005h8" stroke="#4a4" stroke-width="2.500"/><path d="M103.500 992v15" stroke="#c33" stroke-width="2.500"/>
</g>
<rect x="117" y="994" width="12" height="12.500" rx="2" fill="#fafafa" stroke="#ccc"/><path d="M124.500 997.500v5.500l-3-2.700z" fill="#222"/>
<rect x="129" y="994" width="843" height="12" rx="2" fill="#dcdcdc"/>
<rect x="803" y="993" width="123" height="13.500" rx="2" fill="#f8f8f8" stroke="#d0d0d0"/><path d="M863 997v5M865 997v5" stroke="#aaa"/>
<rect x="973.700" y="994" width="12" height="12.500" rx="2" fill="#fafafa" stroke="#ccc"/><path d="M978 997.500v5.500l3-2.700z" fill="#222"/>
<g id="zooms">
<path d="M993 1008L1001 992" stroke="#333" stroke-width="1.200"/><rect x="991" y="1000" width="4" height="7" fill="#c33"/><rect x="996" y="993" width="5" height="9" fill="#4c4" stroke="#383" stroke-width=".5"/>
<circle cx="1018" cy="997.500" r="4.500" fill="#fff" stroke="#333" stroke-width="1.300"/><path d="M1021 1001l4 6" stroke="#333" stroke-width="1.600"/><path d="M1013 992v15M1024 992v15" stroke="#23c" stroke-dasharray="2 2"/>
<circle cx="1040.500" cy="997.500" r="4.500" fill="#fff" stroke="#333" stroke-width="1.300"/><path d="M1043.500 1001l3.500 6" stroke="#333" stroke-width="1.600"/><path d="M1038.500 997.500h4" stroke="#23c" stroke-width="1.500"/>
<circle cx="1062.500" cy="997.500" r="4.500" fill="#fff" stroke="#333" stroke-width="1.300"/><path d="M1065.500 1001l3.500 6" stroke="#333" stroke-width="1.600"/><path d="M1060.500 997.500h4M1062.500 995.500v4" stroke="#23c" stroke-width="1.500"/>
</g>
<use href="#bicons" x="1088"/>
<rect x="1201.600" y="994" width="10.400" height="12.500" rx="2" fill="#fafafa" stroke="#ccc"/><path d="M1208.500 997.500v5.500l-3-2.700z" fill="#222"/>
<rect x="1212" y="994" width="741" height="12" rx="2" fill="#dedede"/>
<rect x="1457" y="993" width="6" height="13.500" rx="2" fill="#f8f8f8" stroke="#ccc"/>
<rect x="1953.500" y="994" width="10.500" height="12.500" rx="2" fill="#fafafa" stroke="#ccc"/><path d="M1957.500 997.500v5.500l3-2.700z" fill="#222"/>
<use href="#zooms" x="980"/>
</svg>
</body></html>
